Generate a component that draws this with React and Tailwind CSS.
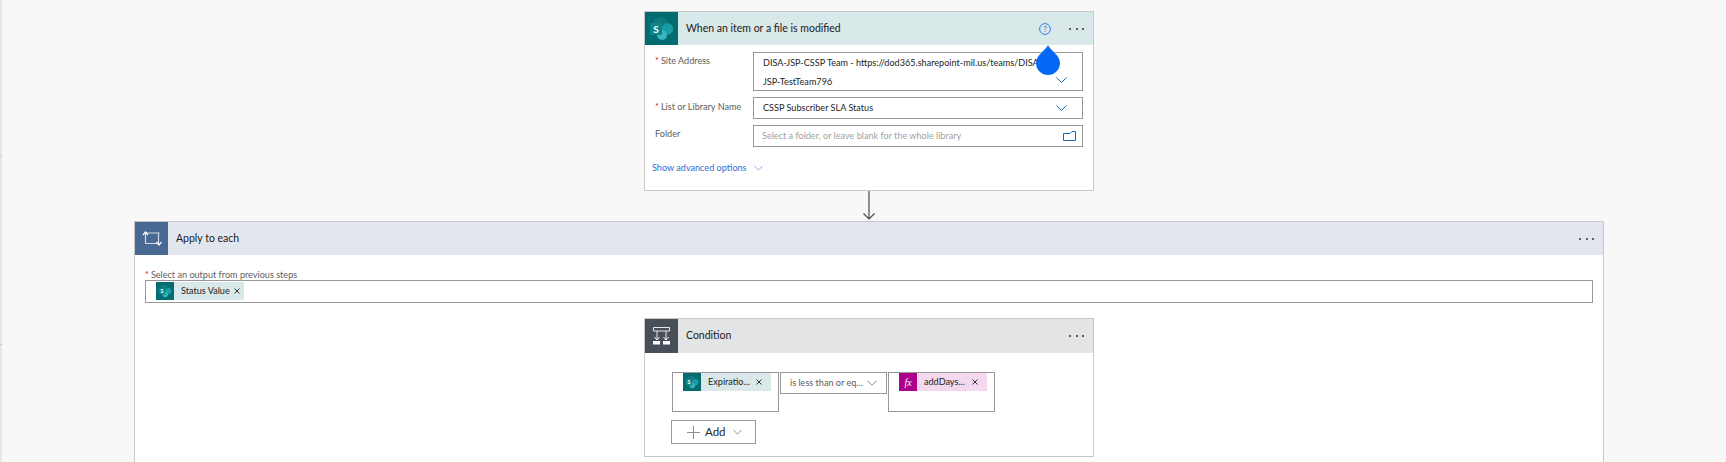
const SpIcon = ({ size = 33 }) => (
  <svg width={size} height={size} viewBox="0 0 33 33" className="shrink-0 block">
    <rect width="33" height="33" fill="#036c70" />
    <circle cx="15.5" cy="12.5" r="7.5" fill="#0c7a7e" />
    <circle cx="22.5" cy="17" r="5.8" fill="#1a9ba1" />
    <circle cx="17" cy="23" r="5" fill="#37b6bf" />
    <rect x="5" y="11" width="12" height="12" rx="1" fill="#0a8589" />
    <text x="11" y="20.5" fontSize="10" fontWeight="700" textAnchor="middle" fill="#ffffff" fontFamily="Lato, sans-serif">S</text>
  </svg>
);

const Chevron = ({ className = "", color = "#0f6cbd" }) => (
  <svg width="11" height="6" viewBox="0 0 11 6" className={className}>
    <path d="M0.5 0.5 L5.5 5.5 L10.5 0.5" fill="none" stroke={color} strokeWidth="1" />
  </svg>
);

const Dots = () => (
  <div className="flex gap-[4.5px] items-center">
    <span className="w-[2px] h-[2px] rounded-full bg-[#333333]"></span>
    <span className="w-[2px] h-[2px] rounded-full bg-[#333333]"></span>
    <span className="w-[2px] h-[2px] rounded-full bg-[#333333]"></span>
  </div>
);

const CloseX = () => (
  <svg width="6" height="6" viewBox="0 0 6 6" className="shrink-0">
    <path d="M0.5 0.5 L5.5 5.5 M5.5 0.5 L0.5 5.5" stroke="#333333" strokeWidth="1" />
  </svg>
);

const Label = ({ required, children, className = "" }) => (
  <div className={`text-[9.1px] leading-[14px] text-[#605e5c] whitespace-nowrap ${className}`}>
    {required && <span className="text-[#e81123] mr-[2px]">*</span>}
    {children}
  </div>
);

const Chip = ({ icon, text, bg, closeClass = "mr-[4px]" }) => (
  <div className={`flex items-center w-[88px] h-[18px] ${bg}`}>
    {icon}
    <span className="ml-[7px] text-[9.1px] leading-[18px] text-[#252423] whitespace-nowrap">{text}</span>
    <span className={`ml-auto flex ${closeClass}`}><CloseX /></span>
  </div>
);

const FxIcon = () => (
  <div className="w-[18px] h-[18px] bg-[#ad008c] flex items-center justify-center shrink-0">
    <span className="text-white text-[10px] italic font-['Liberation_Serif',serif]">fx</span>
  </div>
);

export default function App() {
  return (
    <div className="flex h-[462px] w-[1726px] overflow-hidden bg-[#f8f8f8] font-['Lato',sans-serif] relative">
      <div className="w-[2px] h-full bg-[#e6e6e6] shrink-0 flex flex-col">
        <div className="h-[155px]"></div>
        <div className="h-px bg-[#cccccc]"></div>
        <div className="h-[188px]"></div>
        <div className="h-px bg-[#cccccc]"></div>
      </div>

      <div className="ml-[132px] w-[1470px] pt-[11px] flex flex-col items-center shrink-0">
        {/* trigger */}
        <div className="w-[450px] h-[180px] border border-[#c8c8c8] bg-white shrink-0">
          <div className="h-[33px] bg-[#d9e8e8] flex items-center">
            <SpIcon />
            <span className="ml-[8px] text-[10.5px] text-[#1b1a19]">When an item or a file is modified</span>
            <div className="ml-auto mr-[9px] flex items-center gap-[18px]">
              <svg width="12" height="12" viewBox="0 0 12 12">
                <circle cx="6" cy="6" r="5.4" fill="none" stroke="#3a7de0" strokeWidth="1" />
                <text x="6" y="8.8" fontSize="8" textAnchor="middle" fill="#3a7de0" fontFamily="Lato, sans-serif">?</text>
              </svg>
              <Dots />
            </div>
          </div>
          <div className="pt-[7px] pl-[10px] pr-[10px] flex flex-col gap-[6px]">
            <div className="flex">
              <Label required className="w-[98px] pt-[2px]">Site Address</Label>
              <div className="w-[330px] h-[39px] border border-[#989898] pl-[9px] relative text-[9.1px] leading-[18.5px] text-[#252423]">
                <div className="whitespace-nowrap pt-[1px]">DISA-JSP-CSSP Team - https://dod365.sharepoint-mil.us/teams/DISA-</div>
                <div>JSP-TestTeam796</div>
                <Chevron className="absolute right-[15px] bottom-[7px]" />
              </div>
            </div>
            <div className="flex">
              <Label required className="w-[98px] pt-[3px]">List or Library Name</Label>
              <div className="w-[330px] h-[22px] border border-[#989898] pl-[9px] pr-[15px] flex items-center justify-between text-[9.1px] text-[#252423]">
                <span>CSSP Subscriber SLA Status</span>
                <Chevron />
              </div>
            </div>
            <div className="flex">
              <Label className="w-[98px] pt-[2px]">Folder</Label>
              <div className="w-[330px] h-[22px] border border-[#989898] pl-[8px] pr-[6px] flex items-center justify-between text-[9.1px] text-[#a19f9d]">
                <span>Select a folder, or leave blank for the whole library</span>
                <svg width="13" height="10" viewBox="0 0 13 10">
                  <path d="M0.5 2.5 H7 L9 0.5 H12.5 V9.5 H0.5 Z" fill="none" stroke="#0f6cbd" strokeWidth="1" />
                </svg>
              </div>
            </div>
            <div className="flex items-center gap-[7px] mt-[8px] -ml-[3px] text-[9.1px] leading-[14px] text-[#2b6fd6]">
              <span>Show advanced options</span>
              <Chevron color="#6a9be0" className="w-[9px]" />
            </div>
          </div>
        </div>

        {/* connector */}
        <svg width="14" height="30" viewBox="0 0 14 30" className="shrink-0">
          <path d="M7 0 V28 M1.5 22.5 L7 28 L12.5 22.5" fill="none" stroke="#4a4a4a" strokeWidth="1.2" />
        </svg>

        {/* apply to each */}
        <div className="w-[1470px] border border-[#c8c8c8] bg-white shrink-0 pb-[40px]">
          <div className="h-[33px] bg-[#e2e7ef] flex items-center">
            <svg width="33" height="33" viewBox="0 0 33 33" className="shrink-0 bg-[#486991]">
              <path d="M10.5 21.5 V11 H24.5 M10.5 21.5 H23.5 V11" fill="none" stroke="#d4dce8" strokeWidth="1.2" />
              <path d="M8 13 L10.5 10 L13 13 M21.5 20 L24 23 L26.5 20" fill="none" stroke="#ffffff" strokeWidth="1.2" />
            </svg>
            <span className="ml-[8px] text-[10.5px] text-[#1b1a19]">Apply to each</span>
            <div className="ml-auto mr-[9px]"><Dots /></div>
          </div>
          <div className="pt-[13px] px-[10px]">
            <Label required className="h-[12px] leading-[10px]">Select an output from previous steps</Label>
            <div className="h-[23px] border border-[#989898] pl-[10px] pt-[1px]">
              <Chip icon={<SpIcon size={18} />} text="Status Value" bg="bg-[#d9e8e8]" />
            </div>
          </div>
          {/* condition */}
          <div className="mt-[15px] mx-auto w-[450px] h-[139px] border border-[#c8c8c8] bg-white">
            <div className="h-[34px] bg-[#e3e4e6] flex items-center">
              <svg width="33" height="34" viewBox="0 0 33 34" className="shrink-0 bg-[#484f58]">
                <path d="M8.5 8.5 H24.5 V12 H8.5 Z M12 12 V21 M21 12 V21" fill="none" stroke="#e6e7e9" strokeWidth="1" />
                <path d="M9.5 18 L12 21 L14.5 18 M18.5 18 L21 21 L23.5 18" fill="none" stroke="#ffffff" strokeWidth="1" />
                <rect x="8" y="22" width="7" height="3.5" fill="#ffffff" />
                <rect x="18" y="22" width="7" height="3.5" fill="#ffffff" />
              </svg>
              <span className="ml-[8px] text-[10.5px] text-[#1b1a19]">Condition</span>
              <div className="ml-auto mr-[9px]"><Dots /></div>
            </div>
            <div className="pt-[19px] pl-[27px]">
              <div className="flex items-start gap-[1px]">
                <div className="w-[107px] h-[40px] border border-[#989898] pl-[10px] pr-[6px]">
                  <Chip icon={<SpIcon size={18} />} text="Expiratio..." bg="bg-[#d9e8e8]" closeClass="mr-[9px]" />
                </div>
                <div className="w-[107px] h-[22px] border border-[#989898] pl-[9px] pr-[9px] flex items-center justify-between text-[9.1px] text-[#605e5c]">
                  <span className="whitespace-nowrap">is less than or eq...</span>
                  <Chevron color="#7a7a7a" className="w-[10px]" />
                </div>
                <div className="w-[107px] h-[40px] border border-[#989898] pl-[10px] pr-[6px]">
                  <Chip icon={<FxIcon />} text="addDays..." bg="bg-[#f3d8ee]" closeClass="mr-[9px]" />
                </div>
              </div>
              <div className="mt-[8px] -ml-[1px] w-[85px] h-[24px] border border-[#989898] flex items-center pl-[15px]">
                <svg width="13" height="13" viewBox="0 0 13 13" className="shrink-0">
                  <path d="M6.5 0 V13 M0 6.5 H13" stroke="#8f8f8f" strokeWidth="1" />
                </svg>
                <span className="ml-[5px] text-[11.5px] text-[#252423]">Add</span>
                <Chevron color="#7a7a7a" className="ml-[7px] w-[9px]" />
              </div>
            </div>
          </div>
        </div>
      </div>

      {/* cursor drop */}
      <svg width="24" height="30" viewBox="0 0 24 30" className="absolute left-[1036px] top-[45px]">
        <path d="M12 0 C14 5 24 10 24 18 A12 12 0 0 1 0 18 C0 10 10 5 12 0 Z" fill="#0468f5" />
      </svg>
    </div>
  );
}
